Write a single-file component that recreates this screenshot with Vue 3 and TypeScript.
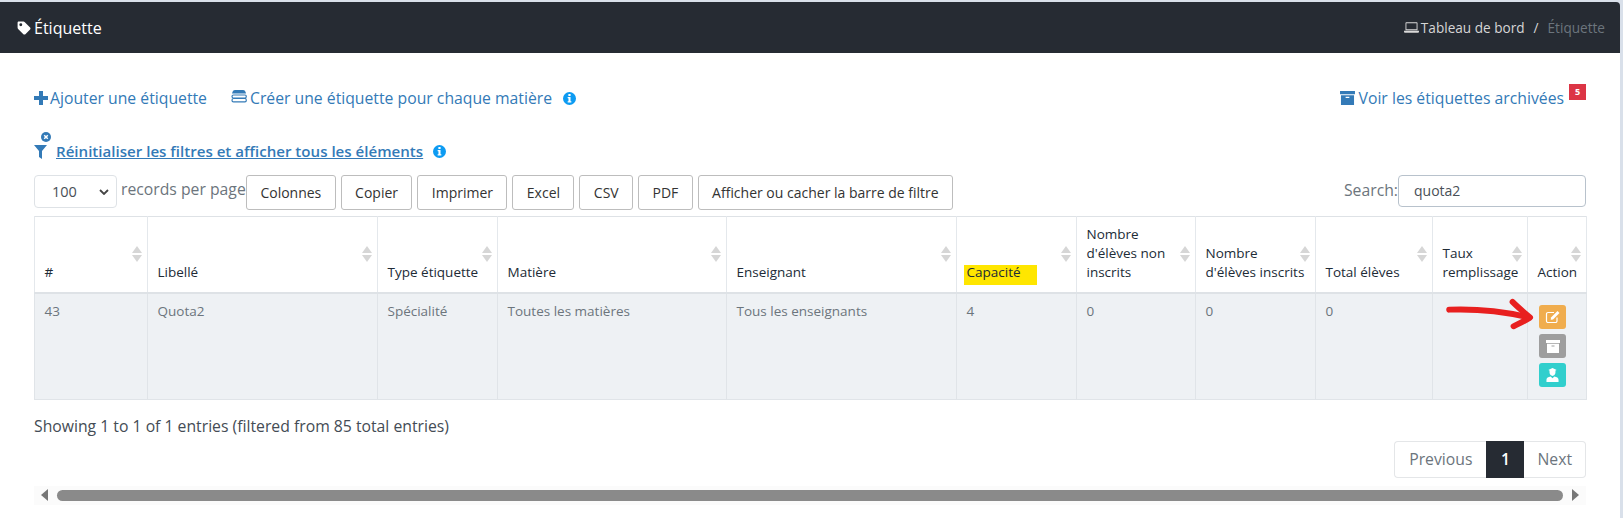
<script setup lang="ts">
interface Col { label: string; width: number; value: string; }
const cols: Col[] = [
  { label: '#', width: 113, value: '43' },
  { label: 'Libellé', width: 230, value: 'Quota2' },
  { label: 'Type étiquette', width: 120, value: 'Spécialité' },
  { label: 'Matière', width: 229, value: 'Toutes les matières' },
  { label: 'Enseignant', width: 230, value: 'Tous les enseignants' },
  { label: 'Capacité', width: 120, value: '4' },
  { label: "Nombre d'élèves non inscrits", width: 119, value: '0' },
  { label: "Nombre d'élèves inscrits", width: 120, value: '0' },
  { label: 'Total élèves', width: 117, value: '0' },
  { label: 'Taux remplissage', width: 95, value: '' },
  { label: 'Action', width: 59, value: '' },
];
const tools: string[] = ['Colonnes', 'Copier', 'Imprimer', 'Excel', 'CSV', 'PDF', 'Afficher ou cacher la barre de filtre'];
</script>

<template>
  <div class="page">
    <header class="topbar">
      <div class="title">
        <svg class="tag" viewBox="0 0 24 24"><path fill-rule="evenodd" d="M3 1h8c1 0 1.700.3 2.400 1l9 9c1 1 1 2.500 0 3.500l-8 8c-1 1-2.500 1-3.500 0l-9-9C1.300 12.800 1 12 1 11V3c0-1.100.9-2 2-2zm3.500 3a2.500 2.500 0 1 0 0 5 2.500 2.500 0 0 0 0-5z"/></svg>
        <span>Étiquette</span>
      </div>
      <nav class="crumbs">
        <svg class="laptop" viewBox="0 0 20 14"><path fill-rule="evenodd" d="M3 0h14a1 1 0 0 1 1 1v9.500H2V1a1 1 0 0 1 1-1zm.2 1.200v8.100h13.600V1.200zM0 11.300h20v1c0 .9-.7 1.700-1.600 1.700H1.600C.7 14 0 13.200 0 12.300z"/></svg>
        <span class="crumb-link">Tableau de bord</span>
        <span class="sep">/</span>
        <span class="crumb-now">Étiquette</span>
      </nav>
    </header>

    <main class="content">
      <div class="links">
        <a class="link plus-link">
          <svg class="plus" viewBox="0 0 14 14"><path d="M5 0h4v5h5v4H9v5H5V9H0V5h5z"/></svg>
          Ajouter une étiquette
        </a>
        <a class="link stack-link">
          <svg class="stack" viewBox="0 0 16 14"><path d="M4 0h8c1.500 0 2.500 1 3 3.500H1C1.500 1 2.500 0 4 0z"/><path d="M2.500 5h11.500M14 5c.8 0 1.300.6 1.300 1.500S14.800 8 14 8H2.500C1.500 8 1 7.300 1 6.500S1.500 5 2.500 5M2.500 8.500H14c.8 0 1.300.7 1.300 1.700s-.5 1.600-1.300 1.600H2.500c-1 0-1.500-.7-1.500-1.600s.5-1.700 1.500-1.700" fill="none" stroke="#337ab7" stroke-width="1.200"/></svg>
          Créer une étiquette pour chaque matière
        </a>
        <svg class="info first-info" viewBox="0 0 14 14"><path fill-rule="evenodd" d="M7 0a7 7 0 1 1 0 14A7 7 0 0 1 7 0zM5.800 2.200v2.100h2.400V2.200zM5 5.500v1.300h.9v3.200H5v1.400h4V10h-.9V5.500z"/></svg>
        <a class="link archive-link">
          <svg class="archive" viewBox="0 0 16 15"><path fill-rule="evenodd" d="M0 0h16v3.500H0zM1 4.500h14V15H1zM6 6.200v1.300h4V6.200z"/></svg>
          Voir les étiquettes archivées
          <span class="badge">5</span>
        </a>
      </div>

      <div class="reset">
        <span class="filter-wrap">
          <svg class="filter" viewBox="0 0 13 14"><path d="M0 0h13L8 6v8l-3-2V6z"/></svg>
          <svg class="filter-x" viewBox="0 0 10 10"><circle cx="5" cy="5" r="5"/><path d="M3.200 3.200l3.600 3.600M6.800 3.200L3.200 6.800" stroke="#fff" stroke-width="1.500"/></svg>
        </span>
        <a class="reset-link">Réinitialiser les filtres et afficher tous les éléments</a>
        <svg class="info" viewBox="0 0 14 14"><path fill-rule="evenodd" d="M7 0a7 7 0 1 1 0 14A7 7 0 0 1 7 0zM5.800 2.200v2.100h2.400V2.200zM5 5.500v1.300h.9v3.200H5v1.400h4V10h-.9V5.500z"/></svg>
      </div>

      <div class="toolbar">
        <div class="select-box">
          <span>100</span>
          <svg class="chev" viewBox="0 0 10 6"><path d="M1 1l4 4 4-4" fill="none" stroke="#444" stroke-width="1.800"/></svg>
        </div>
        <span class="rpp">records per page</span>
        <div class="tools">
          <button v-for="t in tools" :key="t" class="tool" type="button">{{ t }}</button>
        </div>
        <label class="search">Search:<span class="search-input">quota2</span></label>
      </div>

      <div class="table-wrap">
        <table class="grid">
          <colgroup>
            <col v-for="c in cols" :key="c.label" :style="{ width: c.width + 'px' }" />
          </colgroup>
          <thead>
            <tr>
              <th v-for="c in cols" :key="c.label">
                <span v-if="c.label === 'Capacité'" class="hl"></span>
                <span class="th-label">{{ c.label }}</span>
                <span class="sort"><i class="up"></i><i class="down"></i></span>
              </th>
            </tr>
          </thead>
          <tbody>
            <tr>
              <td v-for="c in cols.slice(0, 10)" :key="c.label">{{ c.value }}</td>
              <td class="actions">
                <div class="act-list">
                  <span class="act orange">
                    <svg viewBox="0 0 16 14"><path d="M12 7.500V11a1.500 1.500 0 0 1-1.500 1.500H3A1.500 1.500 0 0 1 1.500 11V4A1.500 1.500 0 0 1 3 2.500h6" fill="none" stroke="#fff" stroke-width="1.200"/><path d="M6 7.500L12.500 1l2 2L8 9.500l-2.300.3z" fill="#fff"/></svg>
                  </span>
                  <span class="act gray">
                    <svg viewBox="0 0 14 13"><path fill-rule="evenodd" d="M0 0h14v3H0zM1 3.800h12V13H1zM5.500 5.500v1h3v-1z" fill="#fff"/></svg>
                  </span>
                  <span class="act teal">
                    <svg viewBox="0 0 14 15"><path d="M7 0l4.500 2-1.300.6v1.900c0 1.300-.6 2.600-1.500 3.200l-1.700 1-1.700-1C4.400 7.100 3.800 5.800 3.800 4.500V2.600L2.500 2zM5 9.200L7 11l2-1.800c2.600.4 4.500 1.600 4.500 3.300V15H.5v-2.500c0-1.700 1.900-2.900 4.500-3.300z" fill="#fff"/></svg>
                  </span>
                </div>
              </td>
            </tr>
          </tbody>
        </table>
        <svg class="arrow" viewBox="0 0 100 40">
          <path d="M3 12 C30 11 60 14 85 20" fill="none" stroke="#e8201f" stroke-width="6" stroke-linecap="round"/>
          <path d="M68 4 C74 10 80 15 86 20 C80 24 75 26 69 29" fill="none" stroke="#e8201f" stroke-width="6" stroke-linecap="round" stroke-linejoin="round"/>
        </svg>
      </div>

      <div class="info-line">Showing 1 to 1 of 1 entries (filtered from 85 total entries)</div>

      <div class="pager">
        <span class="page-btn prev">Previous</span>
        <span class="page-btn current">1</span>
        <span class="page-btn next">Next</span>
      </div>

      <div class="scrollbar">
        <i class="arr left"></i>
        <span class="thumb"></span>
        <i class="arr right"></i>
      </div>
    </main>
  </div>
</template>

<style>
html, body { margin: 0; background: #d9e0ea; }
</style>

<style scoped>
.page {
  width: 1620px;
  height: 518px;
  padding-top: 2px;
  box-sizing: border-box;
  font-family: "Open Sans", "Liberation Sans", sans-serif;
  font-size: 14px;
  color: #6c757d;
  overflow: hidden;
}
.topbar {
  height: 51px;
  background: #262b33;
  border-top-right-radius: 4px;
  display: flex;
  align-items: center;
  justify-content: space-between;
  padding: 0 15px 0 17px;
}
.title { display: flex; align-items: center; color: #fff; font-size: 16px; }
.tag { width: 14px; height: 14px; fill: #fff; margin-right: 3px; }
.crumbs { display: flex; align-items: center; font-size: 13.600px; }
.laptop { width: 15px; height: 11px; fill: #d9d9d9; margin-right: 2px; }
.crumb-link { color: #d6d6d6; }
.sep { color: #d6d6d6; margin: 0 9px; }
.crumb-now { color: #6c757d; }
.content {
  background: #fff;
  height: 465px;
  padding: 0 34px;
  box-sizing: border-box;
}
.links {
  display: flex;
  align-items: center;
  height: 30px;
  padding-top: 30px;
  font-size: 15.750px;
}
.link { color: #337ab7; display: inline-flex; align-items: center; white-space: nowrap; }
.plus { width: 14px; height: 14px; fill: #337ab7; margin-right: 2px; }
.plus-link { margin-right: 24px; }
.stack { width: 16px; height: 14px; fill: #337ab7; margin: -3px 3px 0 0; }
.info { width: 13px; height: 13px; fill: #0d9bf2; flex: none; }
.first-info { margin-left: 11px; }
.archive-link { margin-left: auto; position: relative; padding-right: 22px; }
.archive { width: 15px; height: 14px; fill: #337ab7; margin-right: 4px; }
.badge {
  position: absolute;
  right: 0;
  top: -3px;
  width: 17px;
  height: 16px;
  background: #dc3545;
  color: #fff;
  font-size: 9px;
  font-weight: 700;
  line-height: 15px;
  text-align: center;
}
.reset {
  display: flex;
  align-items: center;
  height: 24px;
  margin-top: 26px;
  font-size: 15.100px;
  font-weight: 600;
}
.filter-wrap { position: relative; width: 22px; height: 14px; margin-top: 2px; flex: none; }
.filter { position: absolute; left: 0; top: 0; width: 13px; height: 14px; fill: #337ab7; }
.filter-x { position: absolute; left: 7px; top: -13px; width: 10px; height: 10px; fill: #337ab7; }
.reset-link { color: #337ab7; text-decoration: underline; margin-right: 10px; white-space: nowrap; }
.toolbar {
  display: flex;
  align-items: flex-start;
  height: 35px;
  margin-top: 12px;
}
.select-box {
  width: 83px;
  height: 33px;
  box-sizing: border-box;
  border: 1px solid #dee2e6;
  border-radius: 4px;
  display: flex;
  align-items: center;
  justify-content: space-between;
  padding: 0 7px 0 17px;
  color: #495057;
  font-size: 14.500px;
}
.chev { width: 10px; height: 6px; }
.rpp { margin-left: 4px; font-size: 15.750px; line-height: 28px; width: 125px; white-space: nowrap; }
.tools { display: flex; gap: 5px; }
.tool {
  height: 35px;
  padding: 0 13.400px;
  background: #fff;
  border: 1px solid #bdbdbd;
  border-radius: 3px;
  font: inherit;
  font-size: 14px;
  color: #333;
  white-space: nowrap;
}
.search {
  margin-left: auto;
  display: flex;
  align-items: flex-start;
  font-size: 15.750px;
  line-height: 30px;
}
.search-input {
  width: 188px;
  height: 32px;
  box-sizing: border-box;
  border: 1px solid #b8c2cc;
  border-radius: 4px;
  padding-left: 15px;
  font-size: 14px;
  line-height: 30px;
  color: #495057;
}
.table-wrap { position: relative; margin-top: 6px; }
.grid {
  table-layout: fixed;
  width: 1552px;
  border-collapse: collapse;
  font-size: 13.500px;
  line-height: 19px;
  border-top: 1px solid #dee2e6;
}
.grid th {
  position: relative;
  height: 76px;
  box-sizing: border-box;
  padding: 8px 8px 10px 9.500px;
  border-left: 1px solid #e4e8ec;
  border-right: 1px solid #e4e8ec;
  border-bottom: 2px solid #dee2e6;
  vertical-align: bottom;
  text-align: left;
  font-weight: 400;
  color: #212b36;
}
.th-label { position: relative; display: block; }
.sort {
  position: absolute;
  right: 5.500px;
  top: 29px;
  display: flex;
  flex-direction: column;
  gap: 2px;
}
.sort i { display: block; width: 0; height: 0; border-left: 5px solid transparent; border-right: 5px solid transparent; }
.sort .up { border-bottom: 7px solid #d6d6d6; }
.sort .down { border-top: 7px solid #d6d6d6; }
.hl {
  position: absolute;
  left: 7px;
  bottom: 7px;
  width: 73px;
  height: 20px;
  background: #ffe600;
}
.grid td {
  height: 106px;
  box-sizing: border-box;
  padding: 8px 9.500px;
  background: #eef1f4;
  border: 1px solid #e0e4e8;
  vertical-align: top;
  color: #6c757d;
}
.grid td.actions { padding: 11px 0 0 11px; }
.act-list { display: flex; flex-direction: column; gap: 5px; }
.act {
  width: 27px;
  height: 24px;
  border-radius: 3px;
  display: flex;
  align-items: center;
  justify-content: center;
}
.act svg { width: 14px; height: 13px; }
.orange svg { width: 16px; height: 14px; }
.teal svg { width: 13px; height: 14px; }
.orange { background: #f0ad4e; }
.gray { background: #9e9e9e; }
.teal { background: #31cfcd; }
.arrow {
  position: absolute;
  left: 1412px;
  top: 82px;
  width: 98px;
  height: 39px;
}
.info-line { margin-top: 16px; height: 20px; line-height: 20px; color: #444c55; font-size: 15.750px; }
.pager { display: flex; justify-content: flex-end; margin-top: 5px; height: 37px; }
.page-btn {
  box-sizing: border-box;
  height: 37px;
  line-height: 35px;
  border: 1px solid #e4e6e8;
  padding: 0 14px;
  font-size: 15.750px;
  color: #6c757d;
}
.prev { border-radius: 4px 0 0 4px; border-right: 0; }
.next { border-radius: 0 4px 4px 0; border-left: 0; padding: 0 13px; }
.current { background: #262b33; border-color: #262b33; color: #fff; font-weight: 600; padding: 0 13.500px; }
.scrollbar {
  display: flex;
  align-items: center;
  height: 19px;
  margin-top: 8px;
  background: #fbfbfb;
  padding: 0 7px;
  gap: 9px;
}
.thumb { flex: 1; height: 11px; background: #8a8a8a; border-radius: 6px; }
.arr { display: block; width: 0; height: 0; border-top: 6px solid transparent; border-bottom: 6px solid transparent; }
.left { border-right: 7px solid #777; }
.right { border-left: 7px solid #777; }
</style>
